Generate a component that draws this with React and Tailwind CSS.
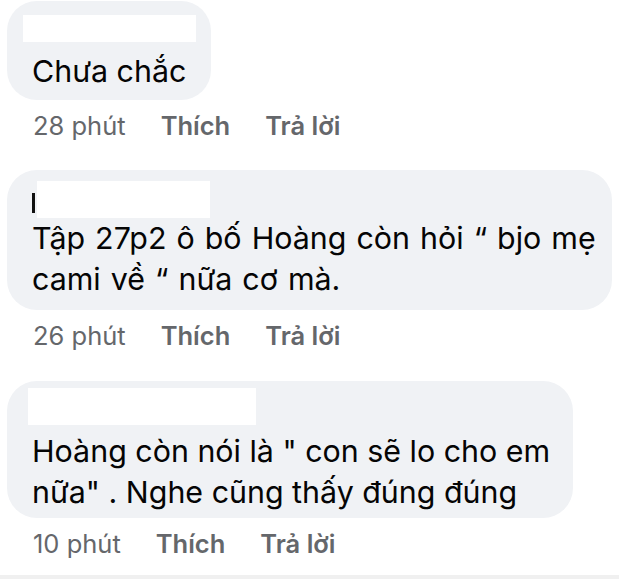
import React from "react";

// Three comment bubbles from a mobile comment thread, names blanked out.
const comments = [
  {
    id: 1,
    time: "28 phút",
    lines: "Chưa chắc",
    bubble: "mt-[1px] w-[204px] pt-[14px] pb-[8px]",
    mask: "-ml-[9px] h-[27px] w-[173px]",
    text: "mt-[9px]",
    meta: "mb-[29px]",
  },
  {
    id: 2,
    time: "26 phút",
    lines: "Tập 27p2 ô bố Hoàng còn hỏi “ bjo mẹ cami về “ nữa cơ mà.",
    bubble: "w-[605px] pt-[11px] pb-[10px]",
    mask: "ml-[2px] h-[37px] w-[173px]",
    text: "mt-0 [word-spacing:1.5px]",
    stem: true,
    meta: "mb-[30px]",
  },
  {
    id: 3,
    time: "10 phút",
    lines: "Hoàng còn nói là \" con sẽ lo cho em nữa\" . Nghe cũng thấy đúng đúng",
    bubble: "w-[566px] pt-[7px] pb-[5px]",
    mask: "-ml-[4px] h-[37px] w-[228px]",
    text: "mt-[6px]",
    meta: "mb-0",
  },
];

function Comment({ c }) {
  return (
    <div>
      <div className={`rounded-[30px] bg-[#f0f2f5] pl-[25px] pr-[10px] ${c.bubble}`}>
        <div className="flex items-start">
          {c.stem && <div className="mt-[12px] h-[20px] w-[3px] bg-[#111]" />}
          <div className={`bg-white ${c.mask}`} />
        </div>
        <p className={`text-[30.4px] leading-[41px] text-[#050505] ${c.text}`}>{c.lines}</p>
      </div>
      <div className={`mt-[11px] flex gap-[35px] pl-[26px] text-[25.5px] leading-[30px] text-[#65676b] ${c.meta}`}>
        <span>{c.time}</span>
        <span className="font-semibold">Thích</span>
        <span className="font-semibold">Trả lời</span>
      </div>
    </div>
  );
}

export default function App() {
  return (
    <div className="flex min-h-screen flex-col bg-white font-['Inter',sans-serif]">
      <div className="px-[7px]">
        {comments.map((c) => (
          <Comment key={c.id} c={c} />
        ))}
      </div>
      <div className="mt-auto h-[4px] bg-[#f0f0f0]" />
    </div>
  );
}
